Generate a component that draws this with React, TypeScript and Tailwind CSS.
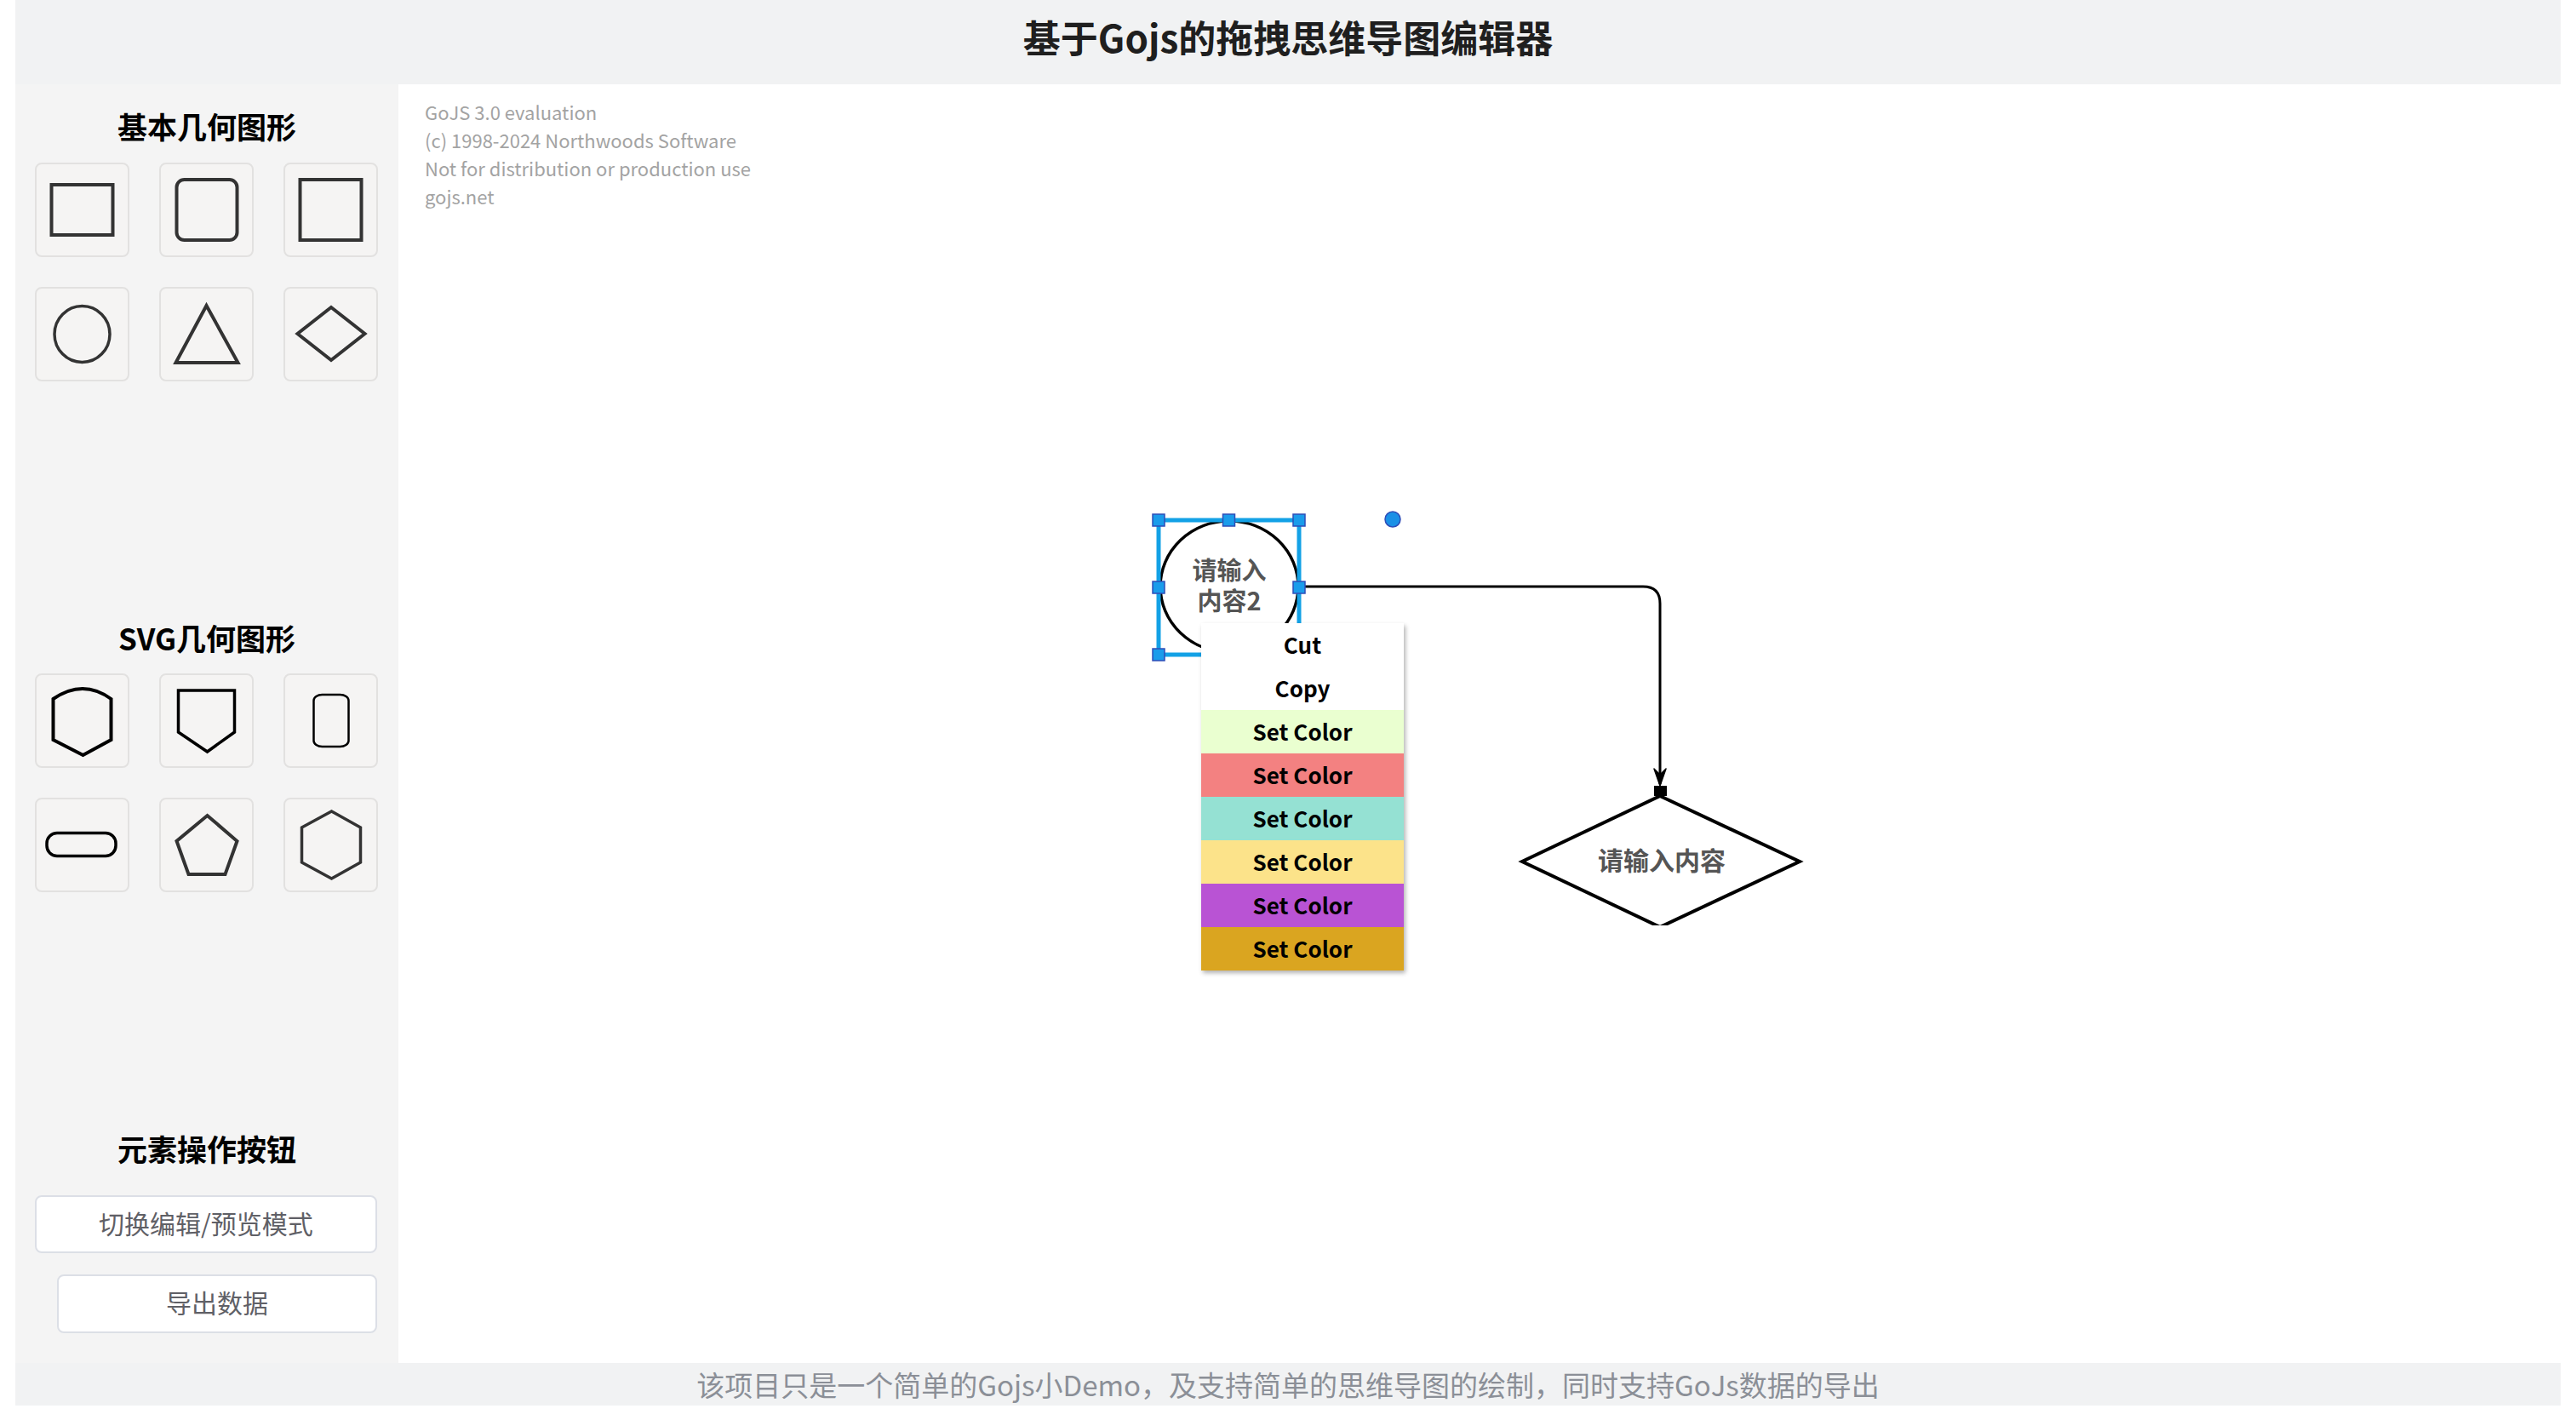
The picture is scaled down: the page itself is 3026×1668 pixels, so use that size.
import React from 'react'

const FONT = { fontFamily: '"Noto Sans CJK SC", "Noto Sans", sans-serif' }

// 基本几何图形
const basicShapes = [
  <rect key="r" x="19" y="26" width="72" height="59" fill="none" stroke="#333" strokeWidth="4" />,
  <rect key="rr" x="20" y="20" width="71" height="71" rx="9" fill="none" stroke="#333" strokeWidth="4" />,
  <rect key="sq" x="19" y="20" width="72" height="71" fill="none" stroke="#333" strokeWidth="4" />,
  <ellipse key="c" cx="55" cy="55.5" rx="32.5" ry="33" fill="none" stroke="#333" strokeWidth="3.5" />,
  <polygon key="t" points="55,22 92,89 19,89" fill="none" stroke="#333" strokeWidth="4" />,
  <polygon key="d" points="55.5,24 95,55 55.5,86 16,55" fill="none" stroke="#333" strokeWidth="4" />,
]

// SVG几何图形
const svgShapes = [
  <path key="s1" d="M21,30 Q56,6 89,30 L89,78 L56,96 L21,78 Z" fill="none" stroke="#000" strokeWidth="4" />,
  <path key="s2" d="M22,20 L88,20 L88,69 L56,92 L22,69 Z" fill="none" stroke="#000" strokeWidth="3.5" />,
  <rect key="s3" x="35" y="25" width="41" height="61" rx="10" ry="7" fill="none" stroke="#000" strokeWidth="2.5" />,
  <rect key="s4" x="13.5" y="41.5" width="81" height="27" rx="12" fill="none" stroke="#000" strokeWidth="3.5" />,
  <polygon key="s5" points="56,21 91,51 77,90 34,90 20,51" fill="none" stroke="#333" strokeWidth="4" />,
  <polygon key="s6" points="56,16 90,35 90,76 56,95 21,76 21,35" fill="none" stroke="#333" strokeWidth="3.5" />,
]

const menuItems = [
  { label: 'Cut', bg: 'bg-white' },
  { label: 'Copy', bg: 'bg-white' },
  { label: 'Set Color', bg: 'bg-[#eaffd0]' },
  { label: 'Set Color', bg: 'bg-[#f38181]' },
  { label: 'Set Color', bg: 'bg-[#95e1d3]' },
  { label: 'Set Color', bg: 'bg-[#fce38a]' },
  { label: 'Set Color', bg: 'bg-[#b953d4]' },
  { label: 'Set Color', bg: 'bg-[#daa520]' },
]

function ShapeGrid({ shapes }: { shapes: React.ReactNode[] }) {
  return (
    <div className="grid grid-cols-[111px_111px_111px] gap-x-[35px] gap-y-[35px] px-[23px]">
      {shapes.map((s, i) => (
        <div key={i} className="w-[111px] h-[111px] bg-[#f5f4f3] border-2 border-[#e2e1e0] rounded-[8px] overflow-hidden">
          <svg width="111" height="111" viewBox="0 0 110 111" className="-m-[2px] block">
            {s}
          </svg>
        </div>
      ))}
    </div>
  )
}

function Heading({ children, className = '' }: { children: React.ReactNode; className?: string }) {
  return (
    <h2 className={`h-[50px] leading-[50px] text-center text-[35px] font-bold text-black ${className}`}>{children}</h2>
  )
}

export default function App() {
  const handles: [number, number][] = [
    [893, 512],
    [975.5, 512],
    [1058, 512],
    [893, 591],
    [1058, 591],
    [893, 670],
  ]

  return (
    <div className="w-[3026px] h-[1668px] bg-white overflow-hidden" style={FONT}>
      <div className="ml-[18px] w-[2990px] h-[1651px] flex flex-col">
        {/* Header */}
        <header className="h-[99px] shrink-0 bg-[#f1f2f3] text-center pt-[13px]">
          <h1 className="text-[44px] leading-[60px] font-bold text-[#1f1f1f]">基于Gojs的拖拽思维导图编辑器</h1>
        </header>

        <div className="flex-1 flex min-h-0">
          {/* Sidebar */}
          <aside className="w-[450px] shrink-0 bg-[#f4f4f4] flex flex-col">
            <Heading className="mt-[24px]">基本几何图形</Heading>
            <div className="mt-[18px]">
              <ShapeGrid shapes={basicShapes} />
            </div>

            <Heading className="mt-[276px]">SVG几何图形</Heading>
            <div className="mt-[17px]">
              <ShapeGrid shapes={svgShapes} />
            </div>

            <Heading className="mt-[276px]">元素操作按钮</Heading>
            <div className="px-[23px] flex flex-col">
              <button className="mt-[30px] h-[68px] w-[402px] pb-[4px] bg-white border-2 border-[#dcdfe6] rounded-[8px] text-[30px] text-[#5f6066]">
                切换编辑/预览模式
              </button>
              <button className="mt-[25px] ml-[26px] h-[69px] w-[376px] pb-[4px] bg-white border-2 border-[#dcdfe6] rounded-[8px] text-[30px] text-[#5f6066]">
                导出数据
              </button>
            </div>
          </aside>

          {/* Canvas */}
          <main className="relative flex-1 bg-white overflow-hidden">
            <div className="pl-[31px] pt-[16px] text-[22px] leading-[33px] text-[#a3a3a3]">
              <p>GoJS 3.0 evaluation</p>
              <p>(c) 1998-2024 Northwoods Software</p>
              <p>Not for distribution or production use</p>
              <p>gojs.net</p>
            </div>

            <svg className="absolute inset-0" width="2540" height="1502">
              <defs>
                <clipPath id="diamondClip">
                  <rect x="1300" y="820" width="380" height="168" />
                </clipPath>
              </defs>

              {/* link */}
              <path d="M1058,590 L1462,590 Q1482,590 1482,610 L1482,822" fill="none" stroke="#000" strokeWidth="3" />
              <path d="M1475,804 L1482,824 L1489,804 L1482,811 Z" fill="#000" stroke="#000" strokeWidth="1.5" strokeLinejoin="round" />

              {/* diamond node */}
              <polygon
                points="1482,836 1646,913 1482,990 1320,913"
                fill="#fff"
                stroke="#000"
                strokeWidth="4"
                clipPath="url(#diamondClip)"
              />
              <rect x="1475" y="824" width="15" height="12" fill="#000" />
              <text x="1484" y="923" textAnchor="middle" fontSize="30" fontWeight="700" fill="#555">
                请输入内容
              </text>

              {/* circle node */}
              <ellipse cx="976" cy="590" rx="81" ry="77" fill="#fff" stroke="#000" strokeWidth="3.5" />
              <text x="976" y="582" textAnchor="middle" fontSize="29" fontWeight="700" fill="#555">
                请输入
              </text>
              <text x="976" y="618" textAnchor="middle" fontSize="29" fontWeight="700" fill="#555">
                内容2
              </text>

              {/* selection adornment */}
              <rect x="893" y="512" width="165" height="158" fill="none" stroke="#13a1e6" strokeWidth="5" />
              {handles.map(([x, y], i) => (
                <rect key={i} x={x - 7} y={y - 7} width="14" height="14" fill="#1a9ceb" stroke="#2e4db8" strokeWidth="1.5" />
              ))}
              <circle cx="1168" cy="511" r="9" fill="#1a90e6" stroke="#2e4db8" strokeWidth="1.5" />
            </svg>

            {/* context menu */}
            <div className="absolute left-[943px] top-[633px] w-[238px] flex flex-col shadow-[2px_3px_5px_rgba(0,0,0,0.3)]">
              {menuItems.map((item, i) => (
                <div
                  key={i}
                  className={`h-[51px] pb-[2px] flex items-center justify-center text-[26px] font-bold text-black ${item.bg}`}
                >
                  {item.label}
                </div>
              ))}
            </div>
          </main>
        </div>

        {/* Footer */}
        <footer className="h-[50px] shrink-0 bg-[#f1f2f3] text-center text-[33px] leading-[50px] text-[#8b8f97]">
          该项目只是一个简单的Gojs小Demo，及支持简单的思维导图的绘制，同时支持GoJs数据的导出
        </footer>
      </div>
    </div>
  )
}
